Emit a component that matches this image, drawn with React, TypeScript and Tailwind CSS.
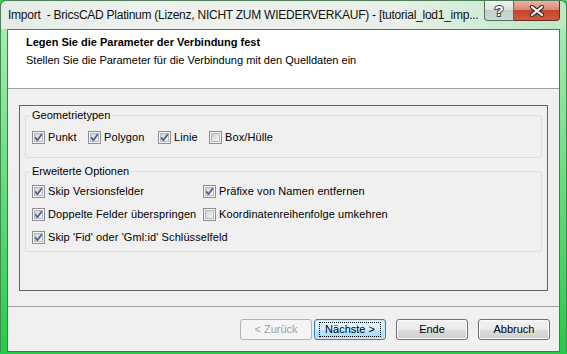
import React from 'react';

function CheckBox({ checked }: { checked: boolean }) {
  return (
    <svg width="13" height="13" viewBox="0 0 13 13" className="shrink-0">
      <defs>
        <linearGradient id="cbInner" x1="0" y1="0" x2="1" y2="1">
          <stop offset="0" stopColor="#cbcfd5" />
          <stop offset="1" stopColor="#f7f7f7" />
        </linearGradient>
      </defs>
      <rect x="0.5" y="0.5" width="12" height="12" fill="#f4f4f4" stroke="#8e8f8f" />
      <rect x="2.5" y="2.5" width="8" height="8" fill="url(#cbInner)" stroke="#b4b9bf" />
      {checked && (
        <path d="M3.2 6.4 L5.4 9.2 L9.8 3.2" fill="none" stroke="#4a5f97" strokeWidth="1.7" strokeLinejoin="round" />
      )}
    </svg>
  );
}

function Option({ label, checked, className = '' }: { label: string; checked: boolean; className?: string }) {
  return (
    <div className={`flex items-center h-[16px] gap-[3px] ${className}`}>
      <CheckBox checked={checked} />
      <span className="leading-[16px] whitespace-nowrap tracking-[0.1px]">{label}</span>
    </div>
  );
}

function Button({ label, kind = 'normal', className = '' }: { label: string; kind?: 'normal' | 'default' | 'disabled'; className?: string }) {
  const look =
    kind === 'disabled'
      ? 'border-[#adb2b5] bg-[#f4f4f4] text-[#a0a0a0]'
      : kind === 'default'
      ? 'border-[#3c7fb1] bg-[linear-gradient(to_bottom,#eaf6fd_0%,#d9f0fc_50%,#bee6fd_50%,#a7d9f5_100%)] shadow-[inset_0_0_0_1px_#c6e9fb]'
      : 'border-[#707070] bg-[linear-gradient(to_bottom,#f2f2f2_0%,#ebebeb_50%,#dddddd_50%,#cfcfcf_100%)] shadow-[inset_0_0_0_1px_#fbfbfb]';
  return (
    <div className={`w-[72px] h-[21px] rounded-[3px] border flex items-center justify-center ${look} ${className}`}>
      {kind === 'default' ? (
        <span className="px-[5px] leading-[13px] border border-dotted border-black">{label}</span>
      ) : (
        <span className="leading-[13px]">{label}</span>
      )}
    </div>
  );
}

export default function App() {
  return (
    <div className="w-[567px] h-[354px] flex flex-col overflow-hidden bg-[#3ed05c] font-['Liberation_Sans',Arial,sans-serif] text-[11px] text-black">
      {/* title bar */}
      <div className="h-[29px] shrink-0 flex items-start bg-[linear-gradient(to_right,#e4ece5_0%,#eef2ee_25%,#e9efe9_70%,#b9e9c2_100%)] rounded-t-[6px] border-t border-x border-[#4f7d57]">
        <div className="flex-1 min-w-0 pl-[7px] pt-[7px] text-[12px] leading-[15px] tracking-[-0.25px] text-[#111] whitespace-nowrap">
          Import&nbsp; - BricsCAD Platinum (Lizenz, NICHT ZUM WIEDERVERKAUF) - [tutorial_lod1_imp...
        </div>
        <div className="flex mr-[6px] shrink-0">
          <div className="w-[30px] h-[20px] border border-t-0 border-[#5b6e66] rounded-bl-[4px] bg-[linear-gradient(to_bottom,#eef4f1_0%,#d7e3de_50%,#bfd0c8_50%,#cbdcd3_100%)] flex items-center justify-center">
            <svg width="14" height="16" viewBox="0 0 14 16">
              <text x="7" y="13" textAnchor="middle" fontFamily="Liberation Sans, Arial, sans-serif" fontSize="15" fontWeight="bold" fill="#fff" stroke="#3f4b48" strokeWidth="2" paintOrder="stroke">?</text>
            </svg>
          </div>
          <div className="w-[46px] h-[20px] border border-t-0 border-l-0 border-[#6b2b22] rounded-br-[4px] bg-[linear-gradient(to_bottom,#eab3a6_0%,#db8a78_45%,#c6432b_50%,#d45b3f_100%)] flex items-center justify-center">
            <svg width="16" height="12" viewBox="0 0 16 12">
              <path d="M3 2 L13 10 M13 2 L3 10" stroke="#3a2a28" strokeWidth="4.2" strokeLinecap="round" />
              <path d="M3 2 L13 10 M13 2 L3 10" stroke="#ffffff" strokeWidth="2.2" strokeLinecap="round" />
            </svg>
          </div>
        </div>
      </div>

      <div className="flex flex-1">
        {/* left frame */}
        <div className="w-[7px] border-l border-[#3f8a4f] bg-[linear-gradient(to_bottom,#a5ecb2,#6fe086_40%,#22cd45)]" />

        {/* client area */}
        <div className="w-[553px] flex flex-col border border-[#55705b] bg-[#f0f0f0]">
          {/* header */}
          <div className="h-[59px] shrink-0 bg-white border-b border-[#a0a0a0] pl-[18px] pt-[5px]">
            <div className="font-bold leading-[14px]">Legen Sie die Parameter der Verbindung fest</div>
            <div className="leading-[14px] mt-[4px]">Stellen Sie die Parameter für die Verbindung mit den Quelldaten ein</div>
          </div>

          {/* body */}
          <div className="px-[11px] pt-[16px]">
            <div className="h-[186px] border border-[#646464] px-[5px] pt-[2px]">
              <fieldset className="border border-[#d5dfe5] rounded-[3px] px-[6px] pb-[12px]">
                <legend className="leading-[14px] px-[1px] -ml-[1px]">Geometrietypen</legend>
                <div className="flex mt-[7px]">
                  <Option label="Punkt" checked className="w-[56px]" />
                  <Option label="Polygon" checked className="w-[70px]" />
                  <Option label="Linie" checked className="w-[51px]" />
                  <Option label="Box/Hülle" checked={false} />
                </div>
              </fieldset>

              <fieldset className="mt-[6px] border border-[#d5dfe5] rounded-[3px] px-[6px] pb-[6px]">
                <legend className="leading-[14px] px-[1px] -ml-[1px]">Erweiterte Optionen</legend>
                <div className="grid grid-cols-[171px_1fr] gap-y-[7px] mt-[5px]">
                  <Option label="Skip Versionsfelder" checked />
                  <Option label="Präfixe von Namen entfernen" checked />
                  <Option label="Doppelte Felder überspringen" checked />
                  <Option label="Koordinatenreihenfolge umkehren" checked={false} />
                  <Option label="Skip 'Fid' oder 'Gml:id' Schlüsselfeld" checked className="col-span-2" />
                </div>
              </fieldset>
            </div>
          </div>

          {/* divider */}
          <div className="mt-[15px] h-px bg-[#a0a0a0]" />

          {/* buttons */}
          <div className="flex justify-end pr-[9px] mt-[12px]">
            <Button label="< Zurück" kind="disabled" />
            <Button label="Nächste >" kind="default" className="ml-[2px]" />
            <Button label="Ende" className="ml-[10px]" />
            <Button label="Abbruch" className="ml-[10px]" />
          </div>
        </div>

        {/* right frame */}
        <div className="w-[7px] border-r border-[#3f8a4f] bg-[linear-gradient(to_bottom,#a5ecb2,#6fe086_40%,#22cd45)]" />
      </div>

      {/* bottom frame */}
      <div className="h-[2px] shrink-0 bg-[#22cd45]" />
    </div>
  );
}
